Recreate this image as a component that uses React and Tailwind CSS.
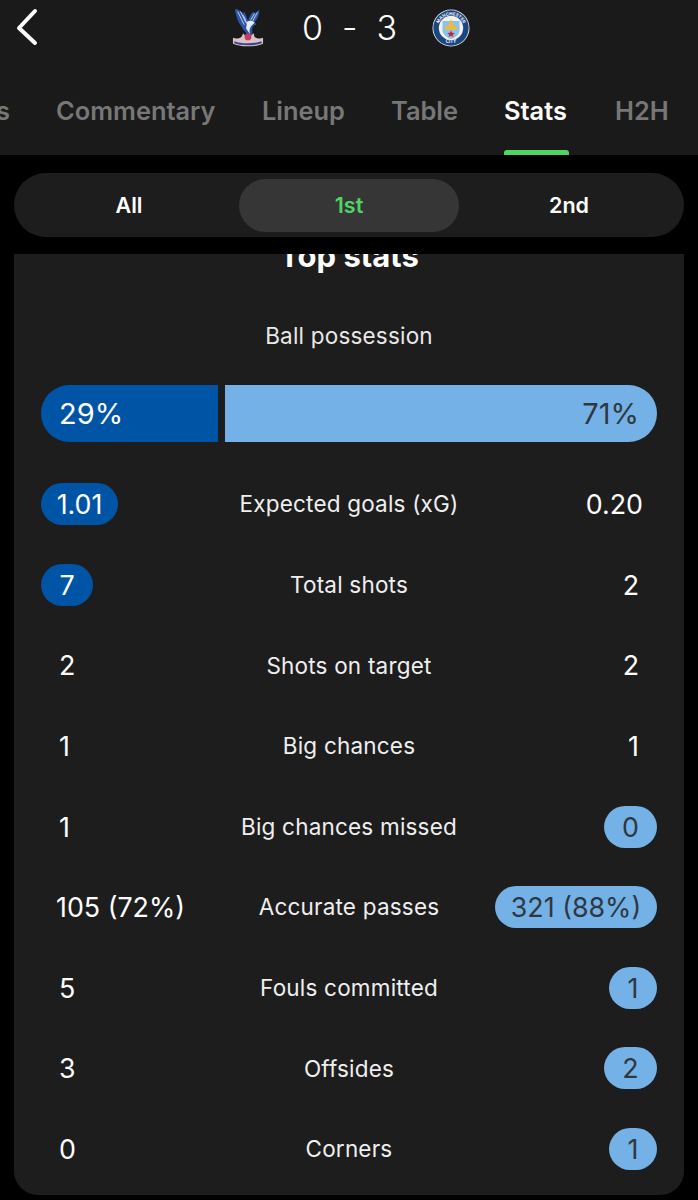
const font = { fontFamily: '"Inter", sans-serif' };

function Palace() {
  return (
    <svg width="32" height="41" viewBox="0 0 34 42" className="block">
      <path d="M3 1 C8 2 10 4 12 6 L13 4 C15 8 16 11 17 14 C18 10 20 6 23 4 L24 6 L29 2 C29 8 27 13 24 15 L26 18 L23 19 C21 22 21 25 22 29 L18 30 C15 27 12 24 10 20 C6 15 4 8 3 1 Z" fill="#2d55a5" />
      <path d="M6 4 L13 18 M9 4 L15 16 M12 8 L16 17" stroke="#c9d6ee" strokeWidth="1" fill="none" />
      <path d="M24 6 L20 13 M27 5 L22 14" stroke="#c9d6ee" strokeWidth="1" fill="none" />
      <path d="M16 15 C19 13 23 14 24 16 L21 19 C19 21 18 24 19 28 L15 22 Z" fill="#e6ebf5" />
      <path d="M1 32 C4 33 7 33 10 31 L12 27 L14 30 L20 30 L23 27 L24 31 C27 33 30 33 33 32 L33 38 C27 42 8 42 1 38 Z" fill="#d9c3c9" />
      <path d="M2.5 36.5 C9 39.5 25 39.5 31.5 36.5" stroke="#37478c" strokeWidth="2.2" fill="none" />
      <circle cx="17" cy="31" r="3.6" fill="#c93a5e" />
    </svg>
  );
}

function City() {
  return (
    <svg width="38" height="38" viewBox="0 0 40 40" className="block">
      <circle cx="20" cy="20" r="19.5" fill="#dfe6ee" />
      <circle cx="20" cy="20" r="18.6" fill="#1c4680" />
      <circle cx="20" cy="20" r="12.8" fill="#f1f2ee" />
      <path id="city-top" d="M6.5 20 A13.5 13.5 0 0 1 33.5 20" fill="none" />
      <text fontSize="4.6" fontWeight="700" fill="#f4f4f4" fontFamily="Inter, sans-serif" textAnchor="middle">
        <textPath href="#city-top" startOffset="50%">MANCHESTER</textPath>
      </text>
      <text x="20" y="36" fontSize="4.6" fontWeight="700" fill="#f4f4f4" fontFamily="Inter, sans-serif" textAnchor="middle">CITY</text>
      <path d="M11 12.5 H29 V22 C29 27 24.5 30 20 31.5 C15.5 30 11 27 11 22 Z" fill="#8cc3e8" />
      <path d="M13.5 20 L15 17 L16.5 18 L18.5 14 L20 10.5 L21.5 14 L23.5 18 L25 17 L26.5 20 L25.5 22 H14.5 Z" fill="#e8b94c" />
      <path d="M20 22.5 L21.2 25 L24 25.2 L21.9 27 L22.6 29.6 L20 28.2 L17.4 29.6 L18.1 27 L16 25.2 L18.8 25 Z" fill="#c6283a" />
    </svg>
  );
}

const rows = [
  { left: "1.01", label: "Expected goals (xG)", right: "0.20", win: "left", lw: "w-[77px]", rText: "pr-[14px]" },
  { left: "7", label: "Total shots", right: "2", win: "left", lw: "w-[52px]", rText: "pr-[18px]" },
  { left: "2", label: "Shots on target", right: "2", lText: "pl-[18px]", rText: "pr-[18px]" },
  { left: "1", label: "Big chances", right: "1", lText: "pl-[18px]", rText: "pr-[18px]" },
  { left: "1", label: "Big chances missed", right: "0", win: "right", rw: "w-[53px]", lText: "pl-[18px]" },
  { left: "105 (72%)", label: "Accurate passes", right: "321 (88%)", win: "right", rw: "w-[162px]", lText: "pl-[15px]" },
  { left: "5", label: "Fouls committed", right: "1", win: "right", rw: "w-[48px]", lText: "pl-[18px]" },
  { left: "3", label: "Offsides", right: "2", win: "right", rw: "w-[53px]", lText: "pl-[18px]" },
  { left: "0", label: "Corners", right: "1", win: "right", rw: "w-[48px]", lText: "pl-[18px]" },
];

function Row({ r }) {
  return (
    <div className="h-[80.6px] flex items-center justify-between relative">
      {r.win === "left" ? (
        <div className={`${r.lw} h-[42px] rounded-full bg-[#0054a6] flex items-center justify-center text-white text-[26.8px]`}>{r.left}</div>
      ) : (
        <div className={`${r.lText} text-white text-[26.8px]`}>{r.left}</div>
      )}
      <div className="absolute inset-x-0 text-center text-[#efefef] text-[22.5px] tracking-[0.2px]">{r.label}</div>
      {r.win === "right" ? (
        <div className={`${r.rw} h-[42px] rounded-full bg-[#74b1e6] flex items-center justify-center text-[#2f373f] text-[26.8px]`}>{r.right}</div>
      ) : (
        <div className={`${r.rText} text-white text-[26.8px]`}>{r.right}</div>
      )}
    </div>
  );
}

export default function App() {
  return (
    <div style={font} className="w-[698px] h-[1200px] bg-black overflow-hidden">
      <header className="h-[155px] bg-[#1a1a1a] relative">
        <div className="absolute left-[13px] top-[8px]">
          <svg width="26" height="38" viewBox="0 0 26 38" fill="none" stroke="white" strokeWidth="4" strokeLinecap="round" strokeLinejoin="round">
            <path d="M22 3 L6 20 L22 35" />
          </svg>
        </div>
        <div className="h-[55px] flex items-center justify-center pl-[4px]">
          <Palace />
          <div className="w-[168px] flex justify-center pl-[3px] text-white text-[34px] font-light">
            <span>0</span><span className="mx-[19px]">-</span><span>3</span>
          </div>
          <City />
        </div>
        <nav className="absolute top-[92px] left-0 right-0 h-[38px] text-[25.4px] font-semibold text-[#777777] leading-[38px]">
          <span className="absolute right-[688px]">s</span>
          <span className="absolute left-[56px]">Commentary</span>
          <span className="absolute left-[262px]">Lineup</span>
          <span className="absolute left-[391px]">Table</span>
          <span className="absolute left-[504px] text-white">Stats</span>
          <span className="absolute left-[615px]">H2H</span>
        </nav>
        <div className="absolute left-[504px] bottom-0 w-[65px] h-[5px] rounded-t-[3px] bg-[#4fd565]" />
      </header>

      <div className="mx-[14px] mt-[18px] h-[64px] rounded-full bg-[#1d1d1d] relative flex items-center text-[21.5px] font-semibold text-white">
        <div className="absolute left-[225px] top-[6px] w-[220px] h-[53px] rounded-full bg-[#363636]" />
        <div className="relative w-[230px] text-center">All</div>
        <div className="relative w-[210px] text-center text-[#4fd565]">1st</div>
        <div className="relative w-[230px] text-center">2nd</div>
      </div>

      <main className="mx-[14px] mt-[17px] h-[941px] rounded-b-[24px] bg-[#1d1d1d] px-[27px] overflow-hidden">
        <div className="h-[15px] relative">
          <div className="absolute -left-[27px] -right-[27px] -top-[21px] text-center text-[31px] font-bold text-white">Top stats</div>
        </div>
        <div className="pt-[52px] text-center text-[#e8e8e8] text-[22.5px] tracking-[0.2px] leading-[30px]">Ball possession</div>
        <div className="mt-[34px] h-[57px] flex gap-[7px] text-[29px]">
          <div className="w-[177px] rounded-l-full bg-[#0054a6] text-white flex items-center pl-[18px]">29%</div>
          <div className="flex-1 rounded-r-full bg-[#74b1e6] text-[#2f373f] flex items-center justify-end pr-[18px]">71%</div>
        </div>
        <div className="mt-[22px]">
          {rows.map((r) => <Row key={r.label} r={r} />)}
        </div>
      </main>
    </div>
  );
}
